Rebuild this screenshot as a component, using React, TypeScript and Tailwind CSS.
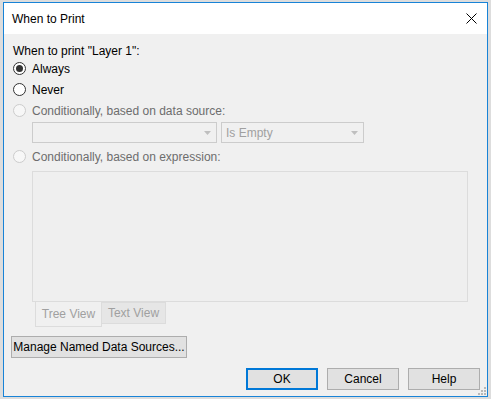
import React from 'react';

const font = { fontFamily: '"Liberation Sans", Arial, sans-serif' };

const Radio = ({ checked, disabled, label }: { checked?: boolean; disabled?: boolean; label: string }) => (
  <div className="flex items-center h-[21px] whitespace-nowrap">
    <span
      className={`w-[13px] h-[13px] rounded-full border flex items-center justify-center ${
        disabled ? 'border-[#cccccc] bg-[#f7f7f7]' : 'border-[#333333] bg-white'
      }`}
    >
      {checked && <span className="w-[7px] h-[7px] rounded-full bg-[#333333]" />}
    </span>
    <span className={`ml-[6px] ${disabled ? 'text-[#6d6d6d]' : 'text-black'}`}>{label}</span>
  </div>
);

const Combo = ({ w, text }: { w: string; text?: string }) => (
  <div className={`${w} h-[21px] border border-[#cccccc] flex items-center justify-between pl-[4px] pr-[5px] text-[#a0a0a0]`}>
    <span>{text}</span>
    <svg width="7" height="4" viewBox="0 0 7 4"><path d="M0 0h7L3.5 4z" fill="#bfbfbf" /></svg>
  </div>
);

const Btn = ({ children, w, primary }: { children: React.ReactNode; w: string; primary?: boolean }) => (
  <div
    className={`${w} h-[22px] flex items-center justify-center whitespace-nowrap bg-[#e1e1e1] text-black ${
      primary ? 'border-2 border-[#0078d7]' : 'border border-[#adadad]'
    }`}
  >
    {children}
  </div>
);

export default function App() {
  return (
    <div className="w-[491px] h-[399px] bg-[#dddddd] pt-[2px] pl-[3px] text-[12px]" style={font}>
      <div className="w-[485px] h-[395px] border border-[#1883d7] flex flex-col bg-[#f0f0f0]">
        <div className="h-[31px] bg-white flex items-center justify-between pl-[8px] pr-[10px]">
          <span className="text-black">When to Print</span>
          <svg width="11" height="11" viewBox="0 0 11 11"><path d="M0.5 0.5l10 10M10.5 0.5l-10 10" stroke="#000" strokeWidth="1" /></svg>
        </div>
        <div className="flex-1 flex flex-col pl-[9px] pr-[7px] relative">
          <div className="mt-[8px] h-[17px] flex items-center">When to print "Layer 1":</div>
          <div className="-mt-[1px]">
            <Radio checked label="Always" />
            <Radio label="Never" />
            <Radio disabled label="Conditionally, based on data source:" />
          </div>
          <div className="flex ml-[19px] mt-[1px] gap-[4px]">
            <Combo w="w-[185px]" />
            <Combo w="w-[143px]" text="Is Empty" />
          </div>
          <div className="mt-[3px]">
            <Radio disabled label="Conditionally, based on expression:" />
          </div>
          <div className="ml-[19px] mt-[4px] w-[436px] h-[131px] border border-[#dcdcdc] bg-[#efefef]" />
          <div className="flex ml-[22px] items-start">
            <div className="w-[67px] h-[25px] border border-[#dcdcdc] border-t-0 bg-[#f0f0f0] flex items-center justify-center text-[#a0a0a0]">
              Tree View
            </div>
            <div className="w-[64px] h-[22px] border border-[#dcdcdc] border-l-0 bg-[#e6e6e6] flex items-center justify-center text-[#a0a0a0]">
              Text View
            </div>
          </div>
          <div className="mt-[9px] -ml-[2px]">
            <Btn w="w-[176px]">Manage Named Data Sources...</Btn>
          </div>
          <div className="flex justify-end gap-[9px] mt-[10px]">
            <Btn w="w-[72px]" primary>OK</Btn>
            <Btn w="w-[72px]">Cancel</Btn>
            <Btn w="w-[72px]">Help</Btn>
          </div>
          <svg className="absolute right-[1px] bottom-[1px]" width="8" height="8" viewBox="0 0 8 8">
            <g fill="#b8b8b8">
              <rect x="6" y="0" width="2" height="2" />
              <rect x="3" y="3" width="2" height="2" />
              <rect x="6" y="3" width="2" height="2" />
              <rect x="0" y="6" width="2" height="2" />
              <rect x="3" y="6" width="2" height="2" />
              <rect x="6" y="6" width="2" height="2" />
            </g>
          </svg>
        </div>
      </div>
    </div>
  );
}
